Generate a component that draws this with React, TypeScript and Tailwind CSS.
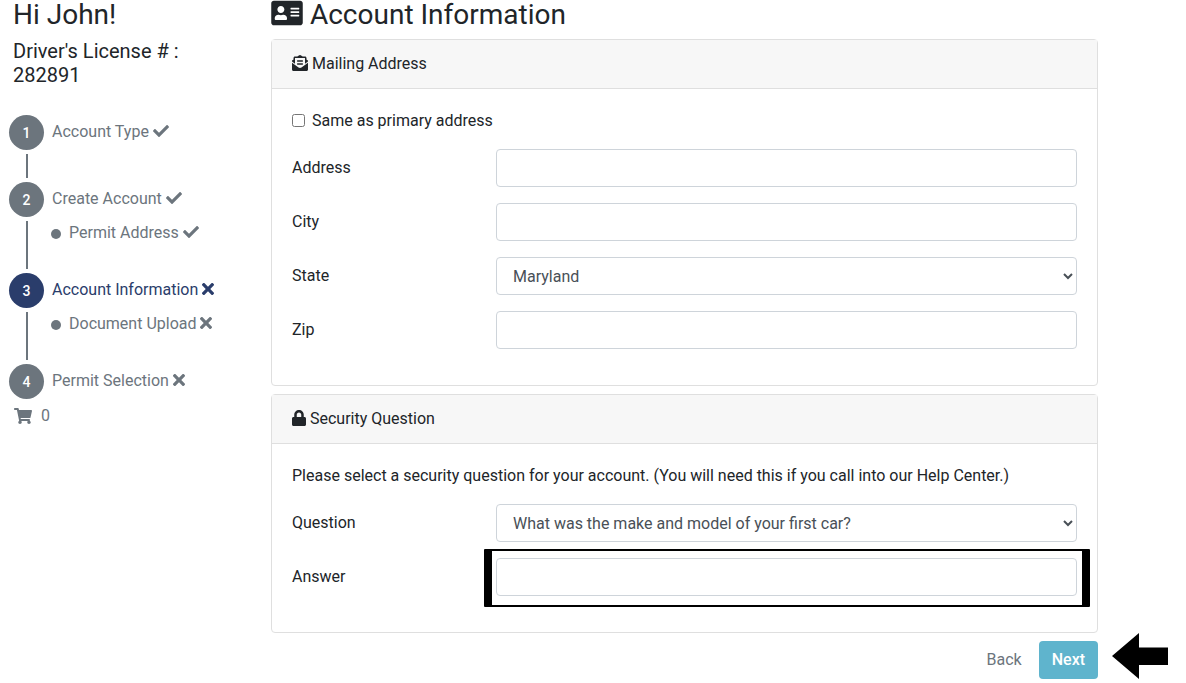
import type { ReactNode } from "react";
import {
  FaAddressCard,
  FaCheck,
  FaEnvelopeOpenText,
  FaLock,
  FaShoppingCart,
  FaTimes,
} from "react-icons/fa";

type Item = { label: string; done: boolean };
type Step = Item & { active?: boolean; children?: Item[] };

const STEPS: Step[] = [
  { label: "Account Type", done: true },
  { label: "Create Account", done: true, children: [{ label: "Permit Address", done: true }] },
  {
    label: "Account Information",
    done: false,
    active: true,
    children: [{ label: "Document Upload", done: false }],
  },
  { label: "Permit Selection", done: false },
];

const STATES = ["Maryland", "Delaware", "Pennsylvania", "Virginia"];

const QUESTIONS = [
  "What was the make and model of your first car?",
  "What is the name of your first pet?",
];

const controlClass =
  "block h-[38px] w-full rounded-sm border border-[#ced4da] bg-white px-3 text-base text-[#495057] outline-none focus:border-[#80bdff]";

function StatusIcon({ done }: { done: boolean }) {
  return done ? (
    <FaCheck className="inline-block align-[-2px]" />
  ) : (
    <FaTimes className="inline-block h-4 w-3 align-[-2px]" preserveAspectRatio="xMinYMid slice" />
  );
}

function StepItem({ step, index, last }: { step: Step; index: number; last: boolean }) {
  return (
    <li className="flex gap-2">
      <div className="flex w-[35px] shrink-0 flex-col items-center">
        <span
          className={`flex h-[35px] w-[35px] items-center justify-center rounded-full text-sm font-medium text-white ${
            step.active ? "bg-[#2a3d6b]" : "bg-[#6c757d]"
          }`}
        >
          {index}
        </span>
        {!last && (
          <span className={`my-1 w-0.5 bg-[#6c757d] ${step.children ? "h-12" : "h-6"}`} />
        )}
      </div>
      <div className="pt-[5px]">
        <a href="#" className={step.active ? "text-[#2a3d6b]" : "text-[#6c757d]"}>
          {step.label} <StatusIcon done={step.done} />
        </a>
        {step.children?.map((child) => (
          <a
            key={child.label}
            href="#"
            className="mt-2.5 -ml-px flex items-center text-[#6c757d]"
          >
            <span className="mt-0.5 mr-2 h-2.5 w-2.5 rounded-full bg-[#6c757d]" />
            <span>
              {child.label} <StatusIcon done={child.done} />
            </span>
          </a>
        ))}
      </div>
    </li>
  );
}

function Card({ icon, title, children }: { icon: ReactNode; title: string; children: ReactNode }) {
  return (
    <section className="mb-2 rounded-sm border border-[#dfdfdf] bg-white">
      <h2 className="border-b border-[#dfdfdf] bg-[#f7f7f7] px-5 py-3">
        {icon} {title}
      </h2>
      <div className="flex flex-col gap-4 px-5 pt-5 pb-9">{children}</div>
    </section>
  );
}

function Field({ id, label, children }: { id: string; label: string; children: ReactNode }) {
  return (
    <div className="grid grid-cols-[204px_1fr]">
      <label htmlFor={id} className="pt-[7px]">
        {label}
      </label>
      <div className="relative">{children}</div>
    </div>
  );
}

export default function App() {
  return (
    <div className="-mt-px flex bg-white font-[Roboto,sans-serif] text-base text-[#212529]">
      <aside className="w-[271px] shrink-0 pl-[9px]">
        <div className="pr-16 pl-1">
          <h1 className="mb-2 text-[28px] leading-8">Hi John!</h1>
          <p className="text-xl leading-6">Driver's License # : 282891</p>
        </div>
        <ol className="mt-7">
          {STEPS.map((step, i) => (
            <StepItem key={step.label} step={step} index={i + 1} last={i === STEPS.length - 1} />
          ))}
        </ol>
        <a href="#" className="mt-[5px] flex items-center gap-[9px] pl-[5px] text-[#6c757d]">
          <FaShoppingCart className="h-4 w-[18px]" />
          <span>0</span>
        </a>
      </aside>

      <main className="mr-[88px] min-w-0 flex-1">
        <h1 className="mb-2 text-[28px] leading-8">
          <FaAddressCard className="inline-block h-7 w-8 align-[-3px]" /> Account Information
        </h1>

        <form onSubmit={(e) => e.preventDefault()}>
          <Card
            icon={<FaEnvelopeOpenText className="inline-block align-[-2px]" />}
            title="Mailing Address"
          >
            <div className="flex items-center">
              <input id="same" type="checkbox" className="mr-[7px] mb-0.5 h-[13px] w-[13px]" />
              <label htmlFor="same">Same as primary address</label>
            </div>
            <Field id="address" label="Address">
              <input id="address" type="text" className={controlClass} />
            </Field>
            <Field id="city" label="City">
              <input id="city" type="text" className={controlClass} />
            </Field>
            <Field id="state" label="State">
              <select id="state" className={controlClass}>
                {STATES.map((s) => (
                  <option key={s}>{s}</option>
                ))}
              </select>
            </Field>
            <Field id="zip" label="Zip">
              <input id="zip" type="text" className={controlClass} />
            </Field>
          </Card>

          <Card
            icon={<FaLock className="inline-block h-4 w-3.5 align-[-2px]" />}
            title="Security Question"
          >
            <p>
              Please select a security question for your account. (You will need this if you call
              into our Help Center.)
            </p>
            <Field id="question" label="Question">
              <select id="question" className={controlClass}>
                {QUESTIONS.map((q) => (
                  <option key={q}>{q}</option>
                ))}
              </select>
            </Field>
            <Field id="answer" label="Answer">
              <input id="answer" type="text" className={controlClass} />
              <span className="pointer-events-none absolute -top-[9px] -right-[13px] -bottom-[11px] -left-3 rounded-[1px] border-x-8 border-y-2 border-black" />
            </Field>
          </Card>

          <div className="relative flex justify-end gap-1">
            <button type="button" className="h-[38px] rounded-sm px-[13px] text-[#6c757d]">
              Back
            </button>
            <button
              type="submit"
              className="h-[38px] rounded-sm bg-[#5fb4cd] px-[13px] font-medium text-white"
            >
              Next
            </button>
            <svg
              viewBox="0 0 56 46"
              className="absolute bottom-0 left-full ml-3.5 h-[46px] w-14"
              aria-hidden="true"
            >
              <path d="M0 23 27 0V14.500H56V32H27V46Z" fill="#000" />
            </svg>
          </div>
        </form>
      </main>
    </div>
  );
}
